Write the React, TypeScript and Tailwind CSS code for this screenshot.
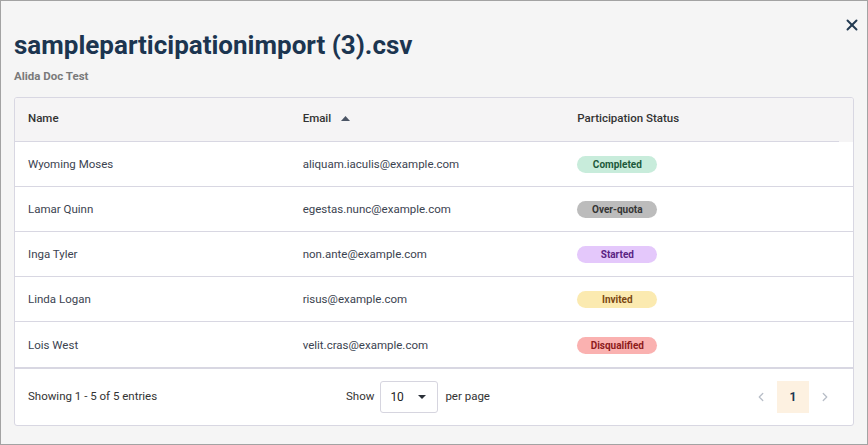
import { X, ChevronLeft, ChevronRight } from 'lucide-react';

type Status = 'Completed' | 'Over-quota' | 'Started' | 'Invited' | 'Disqualified';

interface Participant {
  name: string;
  email: string;
  status: Status;
}

const rows: Participant[] = [
  { name: 'Wyoming Moses', email: 'aliquam.iaculis@example.com', status: 'Completed' },
  { name: 'Lamar Quinn', email: 'egestas.nunc@example.com', status: 'Over-quota' },
  { name: 'Inga Tyler', email: 'non.ante@example.com', status: 'Started' },
  { name: 'Linda Logan', email: 'risus@example.com', status: 'Invited' },
  { name: 'Lois West', email: 'velit.cras@example.com', status: 'Disqualified' },
];

const badgeStyles: Record<Status, string> = {
  Completed: 'bg-[#c8ecdb] text-[#1d5a3b]',
  'Over-quota': 'bg-[#bcbcbc] text-[#353535]',
  Started: 'bg-[#e4c8fb] text-[#5b2483]',
  Invited: 'bg-[#fbeab0] text-[#7a4712]',
  Disqualified: 'bg-[#fab1b0] text-[#8e1b1b]',
};

function StatusBadge({ status }: { status: Status }) {
  return (
    <span
      className={`inline-flex h-[17px] w-[80px] items-center justify-center rounded-full text-[10px] font-bold ${badgeStyles[status]}`}
    >
      {status}
    </span>
  );
}

export default function App() {
  return (
    <div
      className="h-[445px] w-[868px] overflow-hidden border border-[#a3a3a3] bg-[#f5f5f5] text-[#3b4350]"
      style={{ fontFamily: 'Roboto, "Liberation Sans", sans-serif' }}
    >
      <div className="relative px-[13px] pt-[28px]">
        <button className="absolute right-[6px] top-[15px] text-[#233b52]">
          <X className="h-[18px] w-[18px]" strokeWidth={2.6} />
        </button>
        <h1 className="text-[26px] font-bold leading-[32px] text-[#1c3550]">
          sampleparticipationimport (3).csv
        </h1>
        <div className="mt-[8px] text-[11.5px] font-bold leading-[14px] text-[#7a7a7a]">Alida Doc Test</div>

        <div className="mt-[14px] overflow-hidden rounded-[3px] border border-[#d8d7e2] bg-white">
          <div className="bg-[#f5f4f5] pr-[14px]">
            <div className="grid h-[44px] grid-cols-3 items-center border-b border-[#d8d7e2] pb-[2px] text-[11.5px] font-medium text-[#333]">
              <div className="pl-[13px]">Name</div>
              <div className="flex items-center pl-[13px]">
                Email
                <svg className="ml-[10px]" width="9" height="5" viewBox="0 0 9 5">
                  <path d="M0 5 L4.5 0 L9 5 Z" fill="#4b5565" />
                </svg>
              </div>
              <div className="pl-[13px]">Participation Status</div>
            </div>
          </div>
          {rows.map((r, i) => (
            <div
              key={r.email}
              className={`grid h-[45px] grid-cols-3 items-center pr-[14px] pt-[2px] text-[11.5px] ${
                i < rows.length - 1 ? 'border-b border-[#d8d7e2]' : ''
              }`}
            >
              <div className="pl-[13px]">{r.name}</div>
              <div className="pl-[13px]">{r.email}</div>
              <div className="pl-[13px]">
                <StatusBadge status={r.status} />
              </div>
            </div>
          ))}
          <div className="flex h-[58px] items-center border-t-2 border-[#d8d7e2] pl-[13px] pr-[12px] text-[11.5px] text-[#333]">
            <div className="w-[318px]">Showing 1 - 5 of 5 entries</div>
            <div className="flex items-center">
              <span>Show</span>
              <div className="ml-[6px] flex h-[32px] w-[58px] items-center justify-between rounded-[3px] border border-[#d6d5df] bg-white pl-[9px] pr-[11px] text-[12px] text-[#222]">
                <span>10</span>
                <svg width="8" height="4" viewBox="0 0 8 4">
                  <path d="M0 0 L8 0 L4 4 Z" fill="#2a2f38" />
                </svg>
              </div>
              <span className="ml-[7px]">per page</span>
            </div>
            <div className="ml-auto flex items-center">
              <button className="flex h-[32px] w-[32px] items-center justify-center text-[#b8bec8]">
                <ChevronLeft className="h-[14px] w-[14px]" strokeWidth={2.2} />
              </button>
              <button className="flex h-[32px] w-[32px] items-center justify-center bg-[#fdf1e1] text-[12px] font-bold text-[#1d3550]">
                1
              </button>
              <button className="flex h-[32px] w-[32px] items-center justify-center text-[#b8bec8]">
                <ChevronRight className="h-[14px] w-[14px]" strokeWidth={2.2} />
              </button>
            </div>
          </div>
        </div>
      </div>
    </div>
  );
}
